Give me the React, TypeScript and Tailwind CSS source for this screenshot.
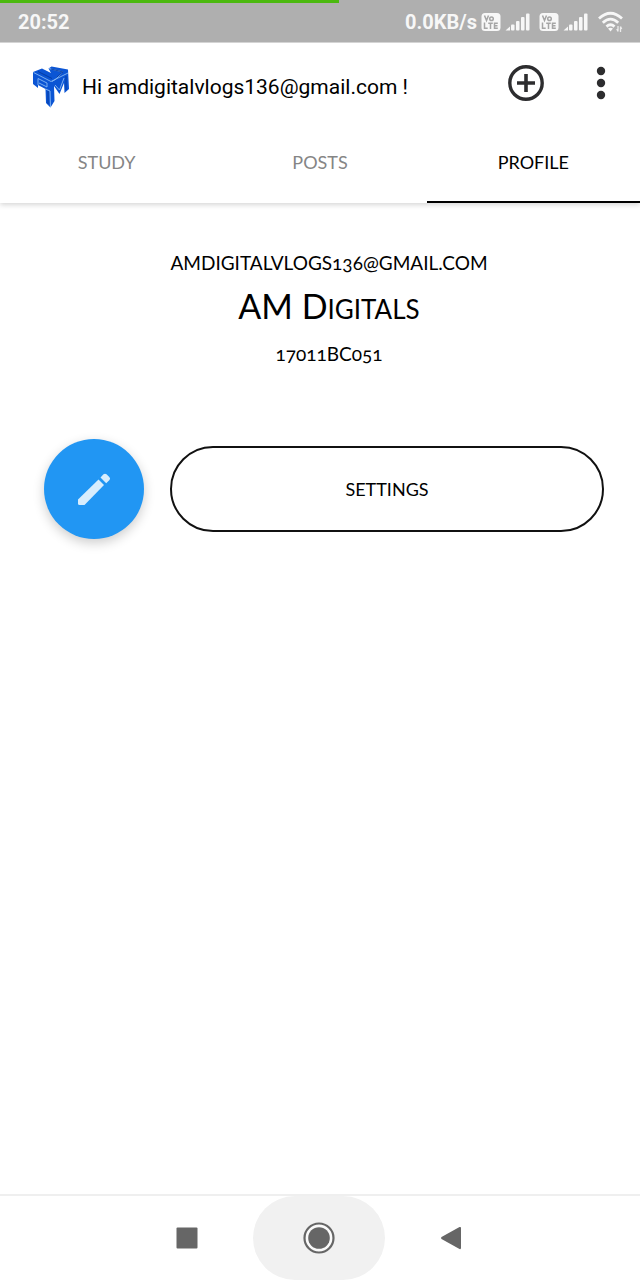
const LteBadge = () => (
  <svg viewBox="0 0 20 20" className="h-5 w-5" aria-label="VoLTE">
    <rect x="0.5" y="1" width="19" height="18" rx="3.5" fill="#f7f7f7" />
    <g fill="none" stroke="#a5a5a5" strokeWidth="1.5">
      <path d="M3.5 3.5l2 5 2-5" />
      <circle cx="10.5" cy="6.7" r="1.8" />
      <path d="M3.5 10.5v5.7h3.2M7.2 11.2h4.6M9.5 11.2v5.8M16.8 11.2h-3.3v5h3.3M13.5 13.7h3" />
    </g>
  </svg>
);

const Signal = () => (
  <svg viewBox="0 0 26 20" className="h-5 w-[26px]" aria-label="Signal">
    <g fill="#f7f7f7">
      <path d="M0.500 18.500L5 14.500v4z" />
      <rect x="6" y="12.500" width="3.500" height="6" rx="1" />
      <rect x="11" y="9" width="3.500" height="9.500" rx="1" />
      <rect x="16" y="5" width="3.500" height="13.500" rx="1" />
      <rect x="21" y="1.500" width="3.500" height="17" rx="1" />
    </g>
  </svg>
);

const Wifi = () => (
  <svg viewBox="0 0 28 22" className="h-[22px] w-7" aria-label="Wi-Fi">
    <g fill="none" stroke="#f7f7f7" strokeWidth="2.800">
      <path d="M2 7.500Q13.500-3 25 7.500" />
      <path d="M5.800 11.700Q13.500 4.500 21.200 11.700" />
      <path d="M9.500 15.600Q13.500 12 17.500 15.600" />
    </g>
    <path d="M11 17.500Q13.500 15.800 16 17.500L13.500 20.500z" fill="#f7f7f7" />
    <path d="M21 15v5.500M23.500 15.500v5.500M19.800 18l1.200 2.500M24.700 18l-1.200-2.500" stroke="#ececec" strokeWidth="1.300" />
  </svg>
);

const Logo = () => (
  <svg viewBox="0 0 38 44" className="h-11 w-[38px]" aria-hidden="true">
    <path d="M1 7L10 3.500 19 8 16.500 3.500 19.500 1.500 36 4.500 37 24 32.500 28 32 18 27.500 29 22 21 22.500 36 18.500 42.500 14 38 13.500 24 6 20 6 23 1 19z" fill="#0b55d4" />
    <g fill="none" stroke="#86b8f4" strokeWidth="0.900">
      <path d="M1.500 7.500L19 16.500 36 8M17 3.500l14 3.500M20 16.500L24 14l7-7M13.500 24L18 26 18.500 42M23 20l4.500 5L32 13" />
      <path d="M6 13.500l9 4.500v4l-8-4M6 13.500V20" />
    </g>
    <g fill="none" stroke="#063b9d" strokeWidth="0.900">
      <path d="M6 6.500l14 7M19 4l12 3-6 5M16 26v13M34 11v14" />
    </g>
  </svg>
);

const tabs = ["STUDY", "POSTS", "PROFILE"];

export default function App() {
  return (
    <div className="flex min-h-screen flex-col bg-white font-['Roboto',sans-serif] text-black">
      <div className="relative flex h-[42px] items-center justify-between bg-[#afafaf] pt-0.5 pr-[15px] pl-[18px] text-[#f7f7f7]">
        <div className="absolute top-0 left-0 h-[3px] w-[53%] bg-[#4bb90f]" />
        <span className="text-xl font-bold">20:52</span>
        <div className="flex items-center gap-2">
          <span className="flex items-center gap-1">
            <span className="text-xl font-bold">0.0KB/s</span>
            <span className="flex items-center gap-1">
              <LteBadge />
              <Signal />
            </span>
          </span>
          <span className="flex items-center gap-1">
            <LteBadge />
            <Signal />
          </span>
          <Wifi />
        </div>
      </div>

      <header className="border-t border-[#d4d4d4] bg-white shadow-[0_2px_5px_rgba(0,0,0,0.16)]">
        <div className="flex h-20 items-center pr-5 pl-8">
          <div className="flex flex-1 items-center gap-3 pt-2">
            <Logo />
            <h1 className="text-[21px] leading-8">Hi amdigitalvlogs136@gmail.com !</h1>
          </div>
          <button type="button" aria-label="Add" className="mr-[38px]">
            <svg viewBox="0 0 36 36" className="h-9 w-9" fill="none" stroke="#2d2d2f">
              <circle cx="18" cy="18" r="16.200" strokeWidth="3.400" />
              <path d="M18 9v18M9 18h18" strokeWidth="3.600" />
            </svg>
          </button>
          <button type="button" aria-label="More options">
            <svg viewBox="0 0 38 34" className="h-[34px] w-[38px]" fill="#2d2d2f">
              <circle cx="19" cy="5" r="4.200" />
              <circle cx="19" cy="17" r="4.200" />
              <circle cx="19" cy="29" r="4.200" />
            </svg>
          </button>
        </div>
        <nav className="grid h-20 grid-cols-3 font-['Lato',sans-serif] text-lg">
          {tabs.map((tab) => (
            <a
              key={tab}
              href={"#" + tab.toLowerCase()}
              className={
                tab === "PROFILE"
                  ? "flex items-center justify-center border-b-2 border-black text-black"
                  : "flex items-center justify-center border-b-2 border-transparent text-[#858585]"
              }
            >
              {tab}
            </a>
          ))}
        </nav>
      </header>

      <main className="flex-1">
        <section className="flex flex-col items-center pt-11 pl-[18px] font-['Lato',sans-serif] oldstyle-nums">
          <p className="text-[19px] leading-8 uppercase">amdigitalvlogs136@gmail.com</p>
          <h2 className="text-[34px] leading-[54px]">
            AM D<span className="text-[26px] uppercase">igitals</span>
          </h2>
          <p className="text-[19px] leading-9">17011BC051</p>
        </section>
        <div className="mt-[67px] flex items-center gap-[26px] pr-9 pl-11">
          <button
            type="button"
            aria-label="Edit profile"
            className="flex h-[100px] w-[100px] shrink-0 items-center justify-center rounded-full bg-[#2196f3] shadow-[0_4px_12px_rgba(0,0,0,0.2)]"
          >
            <svg viewBox="0 0 34 34" className="h-[34px] w-[34px]" fill="#d7edfd">
              <path d="M1 27.500L21.500 7.500 27 13 7.500 33H2.500Q1 33 1 31.500z" />
              <path d="M23.500 5.500L26.500 2.300Q28 1 29.500 2.300L32.300 5.100Q33.800 6.500 32.500 8L29.200 11.200z" />
            </svg>
          </button>
          <button type="button" className="h-[86px] flex-1 rounded-full border-2 border-[#111] font-['Lato',sans-serif] text-lg">
            SETTINGS
          </button>
        </div>
      </main>

      <footer className="flex h-[86px] justify-center border-t-2 border-[#efefef] pr-0.5">
        <button type="button" aria-label="Recent apps" className="flex w-[132px] items-center justify-center">
          <svg viewBox="0 0 22 22" className="h-[22px] w-[22px]" fill="#666">
            <rect x="0.500" y="0.500" width="21" height="21" rx="1" />
          </svg>
        </button>
        <button type="button" aria-label="Home" className="flex w-[132px] items-center justify-center rounded-full bg-[#f1f1f1]">
          <svg viewBox="0 0 32 32" className="h-8 w-8">
            <circle cx="16" cy="16" r="14.500" fill="#fafafa" stroke="#666" strokeWidth="2.200" />
            <circle cx="16" cy="16" r="10.800" fill="#666" />
          </svg>
        </button>
        <button type="button" aria-label="Back" className="flex w-[132px] items-center justify-center">
          <svg viewBox="0 0 22 24" className="h-6 w-[22px]" fill="#666">
            <path d="M1.500 11L19.500 1Q21 0.500 21 2V22Q21 23.500 19.500 23L1.500 13Q0.500 12 1.500 11z" />
          </svg>
        </button>
      </footer>
    </div>
  );
}
